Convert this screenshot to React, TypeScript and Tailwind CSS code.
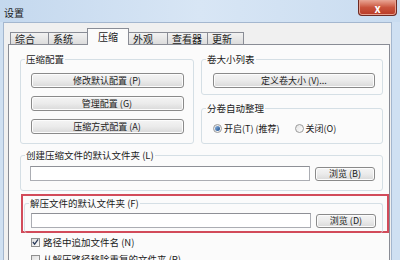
import React from "react";

const FONT = { fontFamily: '"Noto Sans CJK SC", "Noto Sans", sans-serif' };

function Btn({ label, className }: { label: string; className: string }) {
  return (
    <div
      className={
        "flex items-center justify-center rounded-[3px] border border-[#8a8a8a] bg-gradient-to-b from-[#f4f4f4] via-[#ebebeb] to-[#d9d9d9] text-[9px] leading-[10px] text-[#1a1a1a] shadow-[inset_0_0_0_1px_#fcfcfc] " +
        className
      }
    >
      {label}
    </div>
  );
}

function Group({
  title,
  className,
  children,
}: {
  title: string;
  className: string;
  children?: React.ReactNode;
}) {
  return (
    <div className={"flex flex-col rounded-[3px] border border-[#d5dfe5] " + className}>
      <span className="-mt-[7px] ml-[4px] self-start bg-[#fbfbfb] px-[1px] text-[9.5px] leading-[12px] text-[#1a1a1a]">
        {title}
      </span>
      {children}
    </div>
  );
}

function Radio({ checked }: { checked?: boolean }) {
  return (
    <div className="flex h-[9px] w-[9px] items-center justify-center rounded-full border border-[#9a9a9a] bg-gradient-to-br from-[#e4e4e4] to-[#fdfdfd]">
      {checked && <div className="h-[5px] w-[5px] rounded-full bg-gradient-to-br from-[#8fb6e0] to-[#1c4f8e]" />}
    </div>
  );
}

function Check({ checked }: { checked?: boolean }) {
  return (
    <div className="flex h-[9px] w-[9px] items-center justify-center border border-[#8f8f8f] bg-gradient-to-br from-[#dedede] to-[#fafafa]">
      {checked && (
        <svg width="8" height="8" viewBox="0 0 8 8">
          <path d="M1 4 L3 6.5 L7 1" fill="none" stroke="#2a3a5a" strokeWidth="1.4" />
        </svg>
      )}
    </div>
  );
}

function Tab({ label, w, selected }: { label: string; w: string; selected?: boolean }) {
  if (selected)
    return (
      <div
        className={
          "relative z-10 -mb-px -ml-px flex h-[17px] items-start justify-center border border-b-0 border-[#898c95] bg-[#fbfbfb] pt-[2px] text-[10px] leading-[12px] text-[#1a1a1a] " +
          w
        }
      >
        {label}
      </div>
    );
  return (
    <div
      className={
        "-ml-px flex h-[12px] items-start justify-start border border-b-0 border-[#898c95] bg-gradient-to-b from-[#f2f2f2] to-[#dcdcdc] pl-[4px] text-[10px] leading-[11px] text-[#1a1a1a] " +
        w
      }
    >
      {label}
    </div>
  );
}

export default function App() {
  return (
    <div className="flex h-[260px] w-[400px] flex-col overflow-hidden bg-[#cfe0f2]" style={FONT}>
      {/* title bar */}
      <div className="flex h-[22px] shrink-0 justify-between bg-gradient-to-r from-[#c4d8ee] via-[#d8e6f5] to-[#c9dcf0]">
        <span className="pl-[4px] pt-[7px] text-[10px] leading-[12px] text-[#1a1a1a]">设置</span>
        <div className="mr-[3px] flex h-[16px] w-[39px] items-center justify-center rounded-b-[4px] border border-t-0 border-[#6e2a22] bg-gradient-to-b from-[#e9a594] via-[#c9533c] to-[#b83a26] text-[11px] font-bold leading-[12px] text-white shadow-[inset_0_0_0_1px_#e6a08f]">
          x
        </div>
      </div>

      {/* client */}
      <div className="ml-[3px] mr-[8px] flex flex-1 flex-col border-l border-t border-r border-[#a4b7cf] bg-[#f0f0f0] pt-[5px]">
        {/* tabs */}
        <div className="flex items-end pl-[7px]">
          <Tab label="综合" w="w-[39px]" />
          <Tab label="系统" w="w-[40px]" />
          <Tab label="压缩" w="w-[42px]" selected />
          <Tab label="外观" w="w-[40px]" />
          <Tab label="查看器" w="w-[41px]" />
          <Tab label="更新" w="w-[37px]" />
        </div>

        {/* panel */}
        <div className="ml-[4px] mr-[1px] flex flex-1 flex-col border border-[#898c95] bg-[#fbfbfb] pl-[11px] pt-[14px]">
          <div className="flex gap-[7px]">
            <Group title="压缩配置" className="h-[85px] w-[174px] items-center">
              <Btn label="修改默认配置 (P)" className="mt-[8px] h-[15px] w-[153px]" />
              <Btn label="管理配置 (G)" className="mt-[8px] h-[15px] w-[153px]" />
              <Btn label="压缩方式配置 (A)" className="mt-[8px] h-[15px] w-[153px]" />
            </Group>
            <div className="flex w-[182px] flex-col">
              <Group title="卷大小列表" className="h-[36px] w-[182px]">
                <Btn label="定义卷大小 (V)..." className="ml-[11px] mt-[8px] h-[15px] w-[162px]" />
              </Group>
              <Group title="分卷自动整理" className="mt-[13px] h-[36px] w-[182px]">
                <div className="ml-[11px] mt-[9px] flex items-center text-[9px] leading-[11px] text-[#1a1a1a]">
                  <Radio checked />
                  <span className="ml-[2px]">开启(T) (推荐)</span>
                  <div className="ml-[15px]">
                    <Radio />
                  </div>
                  <span className="ml-[2px]">关闭(O)</span>
                </div>
              </Group>
            </div>
          </div>

          <Group title="创建压缩文件的默认文件夹 (L)" className="mt-[11px] h-[36px] w-[363px]">
            <div className="ml-[9px] mt-[5px] flex items-center">
              <div className="h-[15px] w-[280px] border border-[#abadb3] border-t-[#8e9096] bg-white" />
              <Btn label="浏览 (B)" className="ml-[5px] h-[14px] w-[60px]" />
            </div>
          </Group>

          <div className="ml-[1px] mt-[3px] h-[39px] w-[368px] border-2 border-[#d24b5a] pl-[1px] pt-[7px]">
            <Group title="解压文件的默认文件夹 (F)" className="h-[30px] w-[359px] border-b-0">
              <div className="ml-[6px] mt-[4px] flex items-center">
                <div className="h-[15px] w-[280px] border border-[#abadb3] border-t-[#8e9096] bg-white" />
                <Btn label="浏览 (D)" className="ml-[5px] h-[14px] w-[60px]" />
              </div>
            </Group>
          </div>

          <div className="ml-[11px] mt-[3px] flex items-center text-[9.5px] leading-[12px] text-[#1a1a1a]">
            <Check checked />
            <span className="ml-[3px]">路径中追加文件名 (N)</span>
          </div>
          <div className="ml-[11px] mt-[5px] flex items-center text-[9.5px] leading-[12px] text-[#1a1a1a]">
            <Check />
            <span className="ml-[3px]">从解压路径移除重复的文件夹 (R)</span>
          </div>
        </div>
      </div>
    </div>
  );
}
